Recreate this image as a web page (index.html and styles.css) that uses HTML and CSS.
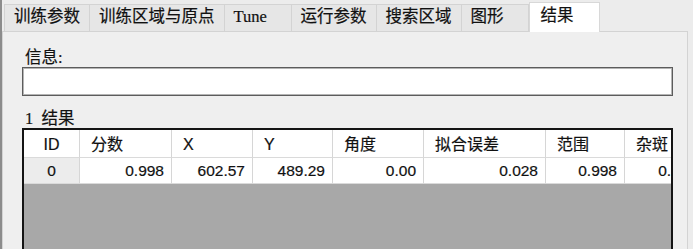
FILE: index.html
```html
<!DOCTYPE html>
<html lang="zh-CN">
<head>
    <meta charset="UTF-8">
    <title>结果</title>
    <link rel="stylesheet" href="styles.css">
</head>
<body>

<div class="window">
    <!-- Tab bar -->
    <div class="tabs">
        <div class="tab">训练参数</div>
        <div class="tab">训练区域与原点</div>
        <div class="tab">Tune</div>
        <div class="tab">运行参数</div>
        <div class="tab">搜索区域</div>
        <div class="tab">图形</div>
        <div class="tab active">结果</div>
    </div>

    <div class="pane">
        <div class="field-label">信息:</div>
        <div class="info-box"></div>

        <div class="field-label result-label">1&nbsp; 结果</div>
        <div class="result-table">
            <div class="grid">
                <div class="cell head center">ID</div>
                <div class="cell head">分数</div>
                <div class="cell head">X</div>
                <div class="cell head">Y</div>
                <div class="cell head">角度</div>
                <div class="cell head">拟合误差</div>
                <div class="cell head">范围</div>
                <div class="cell head">杂斑</div>

                <div class="cell row-head center">0</div>
                <div class="cell num">0.998</div>
                <div class="cell num">602.57</div>
                <div class="cell num">489.29</div>
                <div class="cell num">0.00</div>
                <div class="cell num">0.028</div>
                <div class="cell num">0.998</div>
                <div class="cell num">0.998</div>
            </div>
        </div>
    </div>
</div>

</body>
</html>
```

FILE: styles.css
```css
/* Global Styles */
html, body {
    margin: 0;
    height: 249px;
    overflow: hidden;
    background-color: #ececec;
}

.window {
    height: 249px;
    border-left: 2px solid #8c8c8c;
    font-family: 'Liberation Serif', 'Noto Sans CJK SC', serif;
    font-size: 16.5px;
    color: #111;
    -webkit-text-stroke: 0.2px #111;
}

/* Tab Styles */
.tabs {
    display: flex;
    align-items: flex-end;
    height: 31px;
    padding-left: 2px;
}

.tab {
    box-sizing: border-box;
    height: 27px;
    min-width: 67px;
    padding: 0 9px 0 9px;
    line-height: 24px;
    background-color: #e6e6e6;
    border: 1px solid #d3d3d3;
    border-bottom: none;
    border-left: none;
    white-space: nowrap;
}

.tab:first-child {
    border-left: 1px solid #d3d3d3;
}

.tab.active {
    position: relative;
    z-index: 1;
    height: 30px;
    min-width: 71px;
    margin: 0 0 -1px 0;
    padding-left: 11px;
    background-color: #ffffff;
    border: 1px solid #d8d8d8;
    border-bottom: none;
    line-height: 26px;
}

/* Pane Styles */
.pane {
    box-sizing: border-box;
    width: 686px;
    height: 230px;
    padding: 16px 14px 0 19px;
    background-color: #efefef;
    border: 1px solid #d3d3d3;
    border-bottom: none;
    overflow: hidden;
}

.field-label {
    height: 19px;
    line-height: 19px;
    padding-left: 3px;
}

.info-box {
    box-sizing: border-box;
    height: 29px;
    background-color: #ffffff;
    border: 1px solid #5c5c5c;
    box-shadow: inset 0 0 0 1px #b4b4b4;
}

.result-label {
    margin-top: 13px;
}

/* Table Styles */
.result-table {
    box-sizing: border-box;
    height: 140px;
    border: 2px solid #141414;
    border-bottom: none;
    background-color: #a8a8a8;
    overflow: hidden;
    font-family: 'Liberation Sans', 'Noto Sans CJK SC', sans-serif;
}

.grid {
    display: grid;
    grid-template-columns: 56px 92px 81px 80px 91px 122px 79px 80px;
    grid-template-rows: 28px 26px;
}

.cell {
    box-sizing: border-box;
    background-color: #ffffff;
    border-right: 1px solid #d6d6d6;
    border-bottom: 1px solid #dadada;
    white-space: nowrap;
    overflow: hidden;
}

.head {
    padding: 2px 0 0 11px;
    font-size: 16px;
    line-height: 26px;
}

.num {
    padding-right: 7px;
    text-align: right;
    font-size: 15.5px;
    line-height: 26px;
}

.row-head {
    background-color: #ececec;
    font-size: 15.5px;
    line-height: 26px;
}

.center {
    padding-left: 0;
    text-align: center;
}
```
